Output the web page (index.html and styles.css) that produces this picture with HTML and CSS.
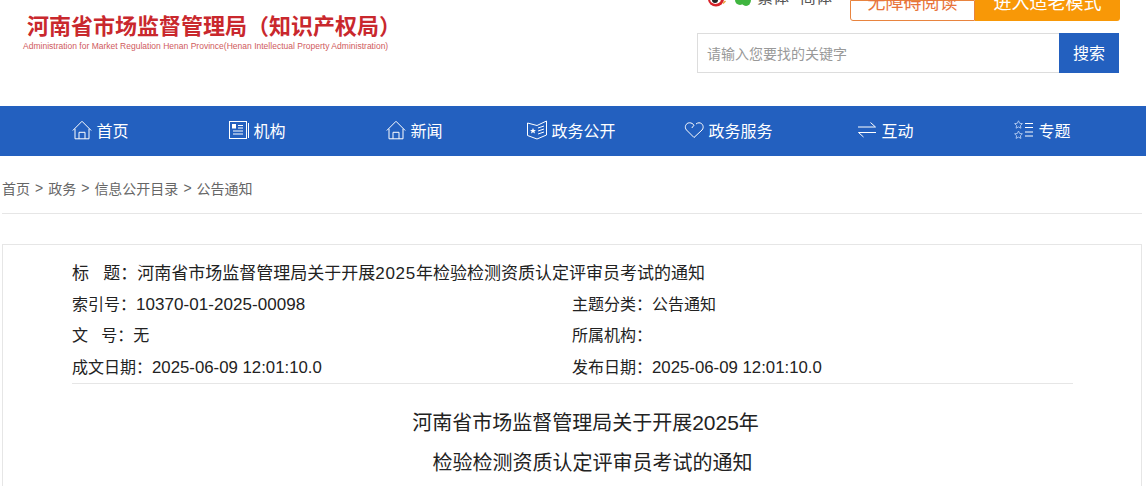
FILE: index.html
```html
<!DOCTYPE html>
<html lang="zh-CN">
<head>
	<meta charset="UTF-8">
	<title>河南省市场监督管理局</title>
	<link rel="stylesheet" href="styles.css">
</head>
<body>
	<header class="top">
		<div class="logo">
			<div class="logo-cn">河南省市场监督管理局（知识产权局）</div>
			<div class="logo-en">Administration for Market Regulation Henan Province(Henan Intellectual Property Administration)</div>
		</div>
		<div class="tools">
			<div class="tools-row">
				<svg class="weibo" width="18" height="7" viewBox="0 0 18 7"><ellipse cx="8" cy="-1" rx="8" ry="7.500" fill="#d8232a"/><ellipse cx="7.500" cy="-1" rx="5.500" ry="5" fill="#fff"/><circle cx="7" cy="0" r="3" fill="#222"/><path d="M15 3.500 17.500 1" stroke="#e8a33a" stroke-width="1.500"/></svg>
				<svg class="wechat" width="16" height="6" viewBox="0 0 16 6"><ellipse cx="5" cy="0" rx="5" ry="5" fill="#3fb53f"/><ellipse cx="11" cy="0" rx="5" ry="6" fill="#3fb53f"/></svg>
				<span class="lang">繁体</span>
				<span class="lang lang-sc">简体</span>
				<a class="btn-plain">无障碍阅读</a>
				<a class="btn-orange">进入适老模式</a>
			</div>
			<div class="search">
				<div class="search-input">请输入您要找的关键字</div>
				<div class="search-btn">搜索</div>
			</div>
		</div>
	</header>
	<nav class="nav">
		<a class="nav-item">
			<svg width="20" height="20" viewBox="0 0 20 20" fill="none" stroke="#fff"><path d="M.8 10.500 10 1.300l9.200 9.200M3 8.800v10h14v-10M7 18.800v-6.500h6v6.500"/></svg>
			首页
		</a>
		<a class="nav-item">
			<svg width="20" height="20" viewBox="0 0 20 20" fill="none" stroke="#fff"><rect x=".5" y="1.500" width="17" height="17"/><path d="M19.500 3v15M4 11h10M4 14h10M9 5.500h5M9 8h5"/><rect x="3.500" y="4.500" width="3" height="3.500" fill="#fff"/></svg>
			机构
		</a>
		<a class="nav-item">
			<svg width="20" height="20" viewBox="0 0 20 20" fill="none" stroke="#fff"><path d="M.8 10.500 10 1.300l9.200 9.200M3 8.800v10h14v-10M7 18.800v-6.500h6v6.500"/></svg>
			新闻
		</a>
		<a class="nav-item">
			<svg width="20" height="20" viewBox="0 0 20 20" fill="none" stroke="#fff"><path d="M.5 3 10 5.500 19.500 1v14L10 19 .5 15.500z"/><path d="M11 8l6-2M11 11l6-2M11 14l6-2"/><path d="m6 8 .9 2H9l-1.600 1.300.6 2.200-2-1.300-2 1.300.6-2.200L3 10h2.100z" fill="#fff" stroke="none"/></svg>
			政务公开
		</a>
		<a class="nav-item">
			<svg width="20" height="20" viewBox="0 0 20 20" fill="none" stroke="#fff"><path d="M10 17.500 2.500 10C0 7.300 1.800 2.800 5.500 2.800 7.500 2.800 9 3.800 10 5.200L7.800 8M12 4c1-.8 2-1.200 3-1.200 3.700 0 5.500 4.500 3 7.200L10 17.500"/></svg>
			政务服务
		</a>
		<a class="nav-item">
			<svg width="20" height="20" viewBox="0 0 20 20" fill="none" stroke="#fff"><path d="M1 7h17.500L13.500 2.500M19 12.500H1.500L6.500 17"/></svg>
			互动
		</a>
		<a class="nav-item">
			<svg width="20" height="20" viewBox="0 0 20 20" fill="none" stroke="#fff"><path d="m4.500 .8 1.200 2.500 2.700.3-2 1.900.5 2.700-2.400-1.300L2.100 8.200l.5-2.700-2-1.900 2.700-.3zM4.500 11l1.200 2.500 2.700.3-2 1.900.5 2.700-2.400-1.300-2.400 1.300.5-2.700-2-1.900 2.700-.3z" stroke="#a9c4ee"/><path d="M11 3.500h8M11 7.500h8M11 12h8M11 16h8"/></svg>
			专题
		</a>
	</nav>
	<div class="crumbs">
		<a>首页</a><span>&gt;</span><a>政务</a><span>&gt;</span><a>信息公开目录</a><span>&gt;</span><a>公告通知</a>
	</div>
	<main class="panel">
		<div class="meta">
			<div class="meta-row meta-title">标&nbsp;&nbsp;&nbsp;题：河南省市场监督管理局关于开展<span class="year-small">2025</span>年检验检测资质认定评审员考试的通知</div>
			<div class="meta-grid">
				<div class="meta-row">索引号：<span class="num num-code">10370-01-2025-00098</span></div>
				<div class="meta-row">主题分类：公告通知</div>
				<div class="meta-row">文&nbsp;&nbsp;&nbsp;号：无</div>
				<div class="meta-row">所属机构：</div>
				<div class="meta-row">成文日期：<span class="num">2025-06-09 12:01:10.0</span></div>
				<div class="meta-row">发布日期：<span class="num">2025-06-09 12:01:10.0</span></div>
			</div>
		</div>
		<h1 class="doc-title">
			<span class="line-one">河南省市场监督管理局关于开展<span class="year">2025</span>年</span>
			<span class="line-two">检验检测资质认定评审员考试的通知</span>
		</h1>
	</main>
</body>
</html>
```

FILE: styles.css
```css
html, body {
	margin: 0;
	padding: 0;
	height: 486px;
	overflow: hidden;
}
body {
	display: flex;
	flex-direction: column;
	background: #fff;
	color: #333;
	font-family: "Liberation Sans", "Noto Sans CJK SC", sans-serif;
	font-size: 15px;
}
.top {
	display: flex;
	justify-content: space-between;
	flex: none;
	height: 106px;
	padding: 0 27px 0 23px;
	box-sizing: border-box;
}
.logo {
	padding-top: 13px;
}
.logo-cn {
	color: #c9282d;
	font-size: 22px;
	font-weight: bold;
	line-height: 28px;
	margin-left: 4px;
}
.logo-en {
	color: #cf5a5d;
	font-size: 8.500px;
	line-height: 11px;
	letter-spacing: .01px;
}
.tools {
	width: 422px;
}
.tools-row {
	display: flex;
	height: 21px;
	margin: 0 -1px 12px 0;
	overflow: hidden;
}
.weibo {
	margin-left: 11px;
}
.wechat {
	margin-left: 9px;
}
.lang {
	color: #555;
	font-size: 16px;
	line-height: 16px;
	margin: -10px 0 0 6px;
}
.lang-sc {
	margin-left: 11px;
}
.btn-plain, .btn-orange {
	box-sizing: border-box;
	height: 21px;
	line-height: 4px;
	font-size: 18px;
	text-align: center;
}
.btn-plain {
	width: 125px;
	color: #e8743b;
	border: 1px solid #e8843f;
	border-radius: 0 0 0 3px;
	margin-left: 18px;
}
.btn-orange {
	width: 145px;
	color: #fff;
	background: #f89807;
	border-radius: 0 0 3px 0;
	padding-top: 1px;
}
.search {
	display: flex;
	height: 40px;
}
.search-input {
	flex: 1;
	box-sizing: border-box;
	border: 1px solid #ddd;
	border-right: 0;
	padding-left: 9px;
	line-height: 40px;
	color: #999;
	font-size: 14px;
}
.search-btn {
	width: 60px;
	background: #2360bf;
	color: #fff;
	text-align: center;
	line-height: 42px;
	font-size: 16px;
}
.nav {
	display: grid;
	grid-template-columns: repeat(7, 157px);
	flex: none;
	height: 50px;
	background: #2360bf;
	padding-left: 22px;
}
.nav-item {
	display: flex;
	align-items: center;
	justify-content: center;
	gap: 4px;
	padding-bottom: 2px;
	color: #fff;
	font-size: 16px;
}
.crumbs {
	display: flex;
	align-items: center;
	flex: none;
	box-sizing: border-box;
	height: 58px;
	padding-top: 7px;
	margin: 0 4px 30px 2px;
	border-bottom: 1px solid #e6e6e6;
	color: #666;
	font-size: 14px;
}
.crumbs span {
	margin: 0 5px;
}
.panel {
	flex: 1;
	margin: 0 4px 0 2px;
	border: 1px solid #e6e6e6;
	border-bottom: 0;
	padding: 13px 68px 0 69px;
	color: #222;
	overflow: hidden;
}
.meta {
	border-bottom: 1px solid #e6e6e6;
	font-size: 16px;
}
.meta-grid {
	display: grid;
	grid-template-columns: 500px 1fr;
}
.meta-row {
	height: 31.200px;
	line-height: 31px;
	white-space: nowrap;
}
.meta-title {
	font-size: 17px;
}
.year-small {
	letter-spacing: .75px;
}
.num {
	font-size: 16.800px;
}
.num-code {
	font-size: 17px;
	letter-spacing: .05px;
}
.doc-title {
	margin: 19px 0 0;
	text-align: center;
	font-size: 20px;
	font-weight: normal;
	line-height: 40px;
	color: #222;
}
.line-one, .line-two {
	display: block;
}
.line-one {
	padding-left: 26px;
}
.line-two {
	padding-left: 40px;
}
.year {
	font-size: 21px;
}
```
